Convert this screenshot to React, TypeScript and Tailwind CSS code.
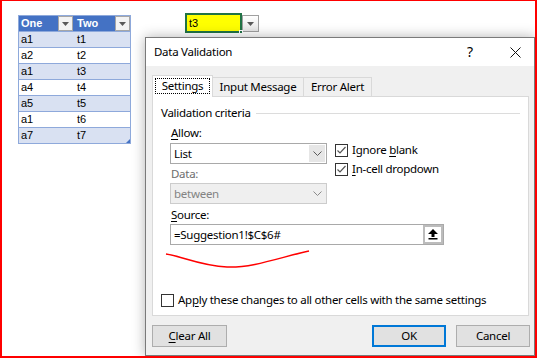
import React from "react";

const rows: [string, string][] = [
  ["a1", "t1"],
  ["a2", "t2"],
  ["a1", "t3"],
  ["a4", "t4"],
  ["a5", "t5"],
  ["a1", "t6"],
  ["a7", "t7"],
];

function FilterBtn() {
  return (
    <div className="w-[15px] h-[15px] bg-[#f3f3f3] border border-[#a6a6a6] flex items-center justify-center">
      <svg width="7" height="4" viewBox="0 0 7 4">
        <polygon points="0,0 7,0 3.5,4" fill="#595959" />
      </svg>
    </div>
  );
}

function Chevron({ color = "#5a5a5a" }: { color?: string }) {
  return (
    <svg width="9" height="5" viewBox="0 0 9 5">
      <polyline points="0.5,0.5 4.5,4.5 8.5,0.5" fill="none" stroke={color} strokeWidth="1" />
    </svg>
  );
}

function Check() {
  return (
    <div className="w-[13px] h-[13px] border border-[#333333] bg-white flex items-center justify-center">
      <svg width="11" height="11" viewBox="0 0 11 11">
        <polyline points="1.5,5.5 4,8 9.5,2" fill="none" stroke="#555555" strokeWidth="1.2" />
      </svg>
    </div>
  );
}

export default function App() {
  return (
    <div className="relative w-[537px] h-[358px] overflow-hidden bg-white border-[#ff0000] border-t border-l-2 border-r-2 border-b-2">
      {/* spreadsheet */}
      <div className="flex items-start pl-[16px] pt-[12px] font-['Liberation_Sans',sans-serif] text-[11px] leading-[15px]">
        <div className="mt-[2px] w-[113px] border border-[#8ea9db] relative">
          <div className="flex h-[15px] bg-[#4472c4] text-white font-bold">
            <div className="w-[55px] flex items-center justify-between pl-[2px] pr-[1px]">
              <span>One</span>
              <FilterBtn />
            </div>
            <div className="flex-1 flex items-center justify-between pl-[3px]">
              <span>Two</span>
              <FilterBtn />
            </div>
          </div>
          {rows.map((r, i) => (
            <div
              key={i}
              className={`flex h-[16px] border-t border-[#8ea9db] text-black ${i % 2 === 0 ? "bg-[#d9e1f2]" : "bg-white"}`}
            >
              <div className="w-[55px] pl-[2px]">{r[0]}</div>
              <div className="flex-1 pl-[3px]">{r[1]}</div>
            </div>
          ))}
          <svg className="absolute right-0 bottom-0" width="4" height="4" viewBox="0 0 4 4">
            <polygon points="4,0 4,4 0,4" fill="#4472c4" />
          </svg>
        </div>
        <div className="ml-[54px] flex items-start">
          <div className="relative w-[57px] h-[20px] border-2 border-[#217346] bg-[#ffff00] pl-[2px] leading-[16px] text-black">
            t3
            <div className="absolute right-[-3px] bottom-[-3px] w-[4px] h-[4px] bg-[#217346] border border-white" />
          </div>
          <div className="mt-[2px] w-[17px] h-[17px] border border-[#a0a0a0] bg-gradient-to-b from-white to-[#e6e6e6] flex items-center justify-center">
            <svg width="7" height="4" viewBox="0 0 7 4">
              <polygon points="0,0 7,0 3.5,4" fill="#595959" />
            </svg>
          </div>
        </div>
      </div>

      {/* dialog */}
      <div className="absolute left-[143px] top-[36px] w-[390px] h-[319px] border border-[#7a7a7a] bg-[#f0f0f0] flex flex-col shadow-[0_0_12px_rgba(0,0,0,0.3)] font-['Noto_Sans',sans-serif] text-[11.5px] tracking-[-0.27px] leading-[16px] text-black">
        {/* title bar */}
        <div className="h-[28px] bg-white flex items-center pl-[8px]">
          <span className="flex-1">Data Validation</span>
          <span className="w-[10px] text-center text-[14px] tracking-normal">?</span>
          <svg className="ml-[35px] mr-[13px]" width="11" height="11" viewBox="0 0 11 11">
            <path d="M0.5 0.5 L10.5 10.5 M10.5 0.5 L0.5 10.5" stroke="#111" strokeWidth="1" />
          </svg>
        </div>
        {/* body */}
        <div className="flex-1 flex flex-col pl-[6px] pr-[5px] pt-[9px] pb-[8px]">
          {/* tabs */}
          <div className="flex items-end h-[21px]">
            <div className="relative z-10 w-[61px] h-[22px] -mb-px bg-white border-l border-t border-r border-[#d9d9d9] p-[2px]">
              <div className="h-[16px] border border-dotted border-black flex items-center justify-center">
                Settings
              </div>
            </div>
            <div className="w-[91px] h-[19px] border-t border-r border-[#d9d9d9] bg-[#f0f0f0] flex items-center justify-center">
              Input Message
            </div>
            <div className="w-[68px] h-[19px] border-t border-r border-[#d9d9d9] bg-[#f0f0f0] flex items-center justify-center">
              Error Alert
            </div>
          </div>
          {/* panel */}
          <div className="relative h-[220px] bg-white border border-[#d9d9d9] flex flex-col">
            <div className="mt-[8px] h-[16px] flex items-center pl-[8px]">
              <span>Validation criteria</span>
              <div className="ml-[5px] mr-[8px] flex-1 h-px bg-[#dcdcdc]" />
            </div>
            <div className="pl-[17px] mt-[4px]">
              <div className="flex">
                <div className="w-[157px]">
                  <div className="h-[16px] pl-[1px]">
                    <span className="underline underline-offset-2">A</span>llow:
                  </div>
                  <div className="mt-[2px] h-[21px] border border-[#a9a9a9] bg-white flex">
                    <div className="flex-1 pl-[3px] flex items-center">List</div>
                    <div className="w-[18px] bg-[#e6e6e6] border border-white flex items-center justify-center">
                      <Chevron />
                    </div>
                  </div>
                  <div className="mt-[2px] h-[16px] pl-[1px] text-[#6d6d6d]">Data:</div>
                  <div className="mt-[1px] h-[21px] border border-[#cccccc] bg-[#efefef] flex text-[#838383]">
                    <div className="flex-1 pl-[3px] flex items-center">between</div>
                    <div className="w-[18px] flex items-center justify-center">
                      <Chevron color="#8a8a8a" />
                    </div>
                  </div>
                </div>
                <div className="ml-[8px] pt-[17px]">
                  <div className="h-[16px] flex items-center">
                    <Check />
                    <span className="ml-[4px]">
                      Ignore <span className="underline underline-offset-2">b</span>lank
                    </span>
                  </div>
                  <div className="mt-[3px] h-[16px] flex items-center">
                    <Check />
                    <span className="ml-[4px]">
                      <span className="underline underline-offset-2">I</span>n-cell dropdown
                    </span>
                  </div>
                </div>
              </div>
              <div className="mt-[3px] h-[16px] pl-[1px]">
                <span className="underline underline-offset-2">S</span>ource:
              </div>
              <div className="mt-[1px] w-[274px] h-[21px] border border-[#a9a9a9] bg-white flex">
                <div className="flex-1 pl-[3px] flex items-center">=Suggestion1!$C$6#</div>
                <div className="w-[20px] h-[19px] border-2 border-[#bcbcbc] bg-white flex items-center justify-center">
                  <svg width="10" height="11" viewBox="0 0 10 11">
                    <polygon points="5,0 10,5 6.5,5 6.5,8 3.5,8 3.5,5 0,5" fill="#000" />
                    <rect x="0.5" y="9" width="9" height="1.5" fill="#000" />
                  </svg>
                </div>
              </div>
            </div>
            <div className="mt-auto mb-[7px] pl-[8px] h-[16px] flex items-center">
              <div className="w-[13px] h-[13px] border border-[#333333] bg-white" />
              <span className="ml-[4px]">
                Ap<span className="underline underline-offset-2">p</span>ly these changes to all other cells with the same settings
              </span>
            </div>
            <svg className="absolute left-0 top-0 pointer-events-none" width="376" height="218" viewBox="0 0 376 218">
              <path
                d="M13 157 C 28 159, 48 169, 74 170 S 128 160, 156 154"
                fill="none"
                stroke="#ff0000"
                strokeWidth="1.5"
              />
            </svg>
          </div>
          {/* buttons */}
          <div className="mt-[9px] flex h-[22px] -mr-[1px]">
            <div className="w-[75px] h-[22px] border border-[#adadad] bg-[#e1e1e1] flex items-center justify-center">
              <span>
                <span className="underline underline-offset-2">C</span>lear All
              </span>
            </div>
            <div className="flex-1" />
            <div className="w-[74px] h-[22px] border-2 border-[#0078d7] bg-[#e1e1e1] flex items-center justify-center">
              OK
            </div>
            <div className="ml-[10px] w-[74px] h-[22px] border border-[#adadad] bg-[#e1e1e1] flex items-center justify-center">
              Cancel
            </div>
          </div>
        </div>
      </div>
    </div>
  );
}
